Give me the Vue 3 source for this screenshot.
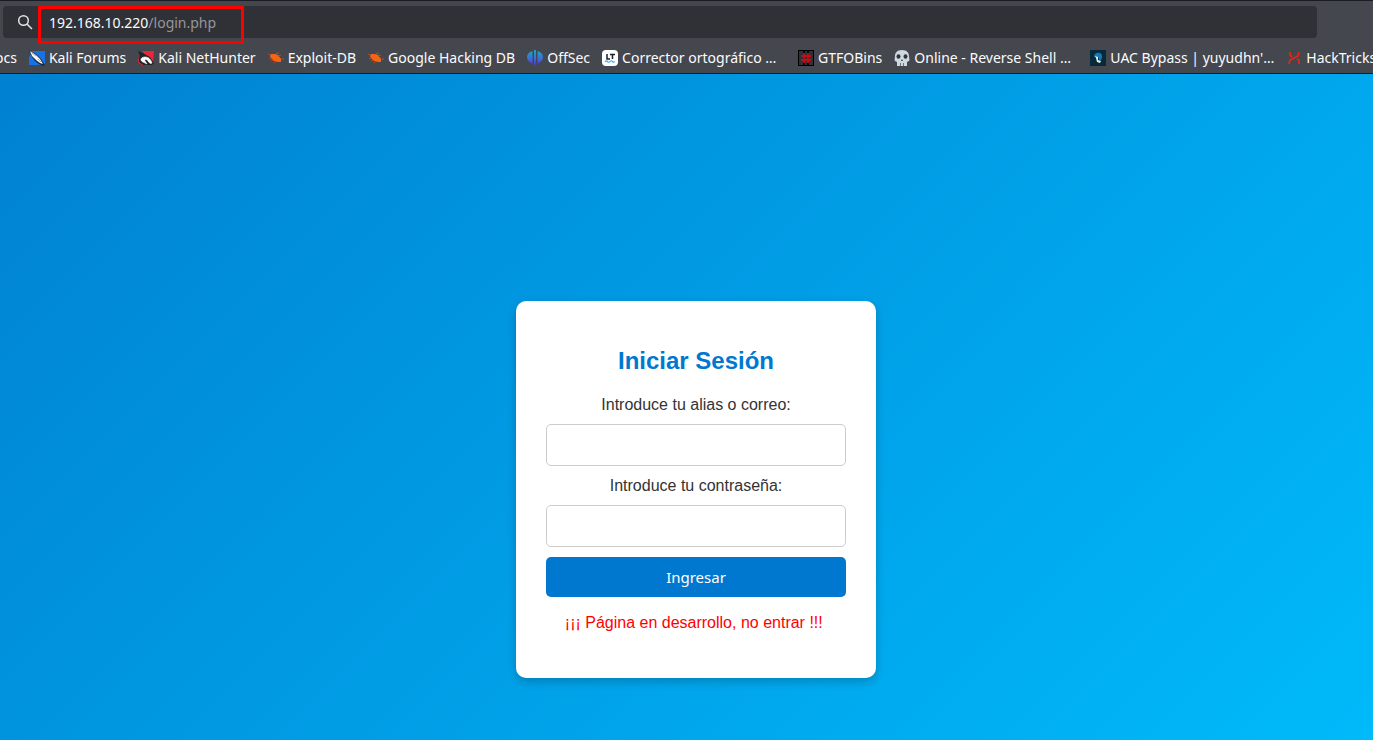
<script setup>
import { ref } from 'vue'

const url = ref('192.168.10.220/login.php')
const alias = ref('')
const password = ref('')

const bookmarks = [
  { label: 'Kali Forums', icon: 'forums' },
  { label: 'Kali NetHunter', icon: 'nethunter' },
  { label: 'Exploit-DB', icon: 'bug' },
  { label: 'Google Hacking DB', icon: 'bug' },
  { label: 'OffSec', icon: 'offsec' },
  { label: 'Corrector ortográfico …', icon: 'lt', long: true },
  { label: 'GTFOBins', icon: 'gtfo' },
  { label: 'Online - Reverse Shell …', icon: 'skull', long: true },
  { label: "UAC Bypass | yuyudhn'…", icon: 'uac', long: true },
  { label: 'HackTricks', icon: 'hack' },
]
</script>

<template>
  <div class="browser">
    <header class="chrome">
      <div class="address">
        <svg class="search" viewBox="0 0 16 16" aria-hidden="true">
          <circle cx="6.5" cy="6.5" r="4.8" /><path d="M10 10l5 5" />
        </svg>
        <a class="url" href="#" :title="url"><span>192.168.10.220</span><span class="path">/login.php</span></a>
      </div>
      <nav class="bookmarks">
        <a href="#" class="mark"><span>ocs</span></a>
        <a v-for="b in bookmarks" :key="b.label" href="#" class="mark">
          <svg class="icon" viewBox="0 0 16 16" aria-hidden="true">
            <g v-if="b.icon === 'forums'">
              <path d="M3 1h13v14H0V8z" fill="#1673e6" />
              <path d="M0 0l7 4 5 5 4 6-2 1-4-2-4-3-3-4z" fill="#25272d" />
              <path d="M1 1l6 4 4 4 3 5-3-1-4-3-4-4z" fill="#f4f5f7" />
              <path d="M3 3l4 3M9 9l3 3" stroke="#aab0ba" stroke-width="1" fill="none" />
            </g>
            <g v-else-if="b.icon === 'nethunter'">
              <path d="M4 1h12l-1 12z" fill="#ec2636" />
              <path d="M0 1l7 3 5 3 4 6-2 2H3L0 11l2-5z" fill="#222329" />
              <path d="M14 13c-1-3-3-6-7-6-5 0-5 4-2 5l4 2-2-3c-1-2 2-2 3 0s3 3 4 2z" fill="#fff" stroke="#fff" stroke-width=".6" />
              <path d="M0 8l1 5 4 2M6 3l7 4" stroke="#ec2636" stroke-width="1" fill="none" />
            </g>
            <g v-else-if="b.icon === 'bug'">
              <path d="M3 4l4 0 3 1 3 4 0 3-3 0-4-1-3-3-1-2z" fill="#f36414" />
              <path d="M2 5L0 4M3 8L1 9M5 10l-2 1M8 4l1-1h2M10 6l3-1M13 9h3M8 11l-2 2" stroke="#ad4e25" stroke-width="1" fill="none" />
            </g>
            <g v-else-if="b.icon === 'offsec'">
              <defs>
                <linearGradient id="offsec-fill" x1="0" y1="0" x2="0" y2="1">
                  <stop offset="0" stop-color="#1aa6c4" /><stop offset=".55" stop-color="#3a6fd8" /><stop offset="1" stop-color="#5a22d8" />
                </linearGradient>
              </defs>
              <path d="M5.500 1v13C2 12 0 10 0 7s2-5 5.500-6zM10.500 1v13C14 12 16 10 16 7s-2-5-5.500-6zM7 0h2v16H7z" fill="url(#offsec-fill)" />
            </g>
            <g v-else-if="b.icon === 'lt'">
              <rect width="16" height="16" rx="4" fill="#fff" />
              <path d="M5 4v5h3M8 4.500h5M10.500 4v5" stroke="#1d1f26" stroke-width="1.500" fill="none" />
              <path d="M3 12q1.200-2 2.500-.500t2.500 0 2.500 0 2.500 0" stroke="#4aa3f5" stroke-width="1.200" fill="none" />
            </g>
            <g v-else-if="b.icon === 'gtfo'">
              <rect x=".5" y=".5" width="15" height="15" fill="#303137" stroke="#000" />
              <path d="M6 1v14M10 1v14" stroke="#08080a" stroke-width="2" />
              <path d="M6 3v10M10 3v10M3 6h10M3 10h10" stroke="#d40e16" stroke-width="1.700" />
            </g>
            <g v-else-if="b.icon === 'skull'">
              <path d="M8 0c5 0 7 3 7 6 0 2 1 4 0 5l-2 1v4H3v-4l-2-1c-1-1 0-3 0-5 0-3 2-6 7-6z" fill="#cfd8df" />
              <ellipse cx="4.500" cy="6.500" rx="2" ry="2.300" fill="#303640" /><ellipse cx="11.500" cy="6.500" rx="2" ry="2.300" fill="#303640" />
              <path d="M8 9l-1 2h2z" fill="#303640" />
              <path d="M6.500 13v3M9.500 13v3" stroke="#66727e" stroke-width="1" />
            </g>
            <g v-else-if="b.icon === 'uac'">
              <rect width="16" height="16" fill="#08283c" />
              <path d="M4 7c0-6 9-5 8 0 0 2-1 3-2 4L8 7z" fill="#1477b8" />
              <path d="M5 6l3 1v3l3 1-1 2-3-1-1-4z" fill="#e5edde" />
            </g>
            <g v-else>
              <path d="M4 2v3l2 2M3 14l1-4 8-4 1-4M13 14v-4l-2-1" stroke="#e62419" stroke-width="1.800" fill="none" />
            </g>
          </svg>
          <span :class="{ long: b.long }">{{ b.label }}</span>
        </a>
      </nav>
    </header>

    <main class="page">
      <form class="card" @submit.prevent>
        <h2>Iniciar Sesión</h2>
        <label for="alias">Introduce tu alias o correo:</label>
        <input id="alias" v-model="alias" type="text" />
        <label for="password">Introduce tu contraseña:</label>
        <input id="password" v-model="password" type="password" />
        <button type="submit">Ingresar</button>
        <p class="notice">¡¡¡ Página en desarrollo, no entrar !!!&nbsp;</p>
      </form>
    </main>
  </div>
</template>

<style>
body {
  margin: 0;
}
</style>

<style scoped>
.browser {
  min-height: 100vh;
  display: flex;
  flex-direction: column;
  overflow: hidden;
  font-family: "Liberation Sans", Arial, sans-serif;
}
.chrome {
  box-sizing: border-box;
  height: 74px;
  padding-top: 5px;
  border-top: 1px solid #1b1b23;
  border-bottom: 1px solid #1b1b23;
  background: #45474e;
  color: #fbfbfe;
  font-family: "Noto Sans", sans-serif;
}
.address {
  display: flex;
  align-items: center;
  height: 32px;
  margin: 0 56px 0 3px;
  border-radius: 4px;
  background: #303136;
}
.search {
  width: 16px;
  height: 16px;
  margin-left: 14px;
  fill: none;
  stroke: #e4e4e8;
  stroke-width: 1.5;
}
.url {
  box-sizing: border-box;
  width: 206px;
  height: 38px;
  margin: 6px 0 0 5px;
  padding-left: 8px;
  border: 3px solid #fe0000;
  color: #fbfbfe;
  font-size: 14px;
  line-height: 28px;
  text-decoration: none;
  white-space: nowrap;
}
.path {
  color: #96969a;
}
.bookmarks {
  display: flex;
  gap: 12px;
  height: 34px;
  padding-top: 3px;
  align-items: center;
  margin-left: -5px;
}
.mark {
  display: flex;
  flex: none;
  align-items: center;
  gap: 4px;
  color: #fbfbfe;
  font-size: 14px;
  line-height: 20px;
  text-decoration: none;
  white-space: nowrap;
}
.icon {
  width: 16px;
  height: 16px;
  flex: none;
}
.long {
  width: 164px;
}
.page {
  flex: 1;
  display: flex;
  align-items: center;
  justify-content: center;
  padding: 165px 0 0 19px;
  background: linear-gradient(135deg, #0081d1, #00bafa);
}
.card {
  box-sizing: border-box;
  width: 360px;
  padding: 30px;
  border-radius: 10px;
  background: #fff;
  box-shadow: 0 4px 10px rgba(0, 0, 0, 0.2);
  color: #333;
  font-size: 16px;
  line-height: 18px;
  text-align: center;
}
h2 {
  margin: 16px 0 20px;
  color: #0078d0;
  font-size: 24px;
  line-height: 28px;
}
label {
  display: block;
  margin: 10px 0;
  line-height: 19px;
}
input {
  display: block;
  box-sizing: border-box;
  width: 100%;
  height: 42px;
  margin: 10px 0;
  padding: 10px;
  border: 1px solid #ccc;
  border-radius: 5px;
  background: #fff;
  font-size: 16px;
}
button {
  display: block;
  width: 100%;
  height: 40px;
  border: 0;
  border-radius: 5px;
  background: #0078d0;
  color: #fff;
  font-family: "Noto Sans", sans-serif;
  font-size: 15px;
}
.notice {
  margin: 16px 0;
  line-height: 19px;
  color: #f00;
}
</style>
